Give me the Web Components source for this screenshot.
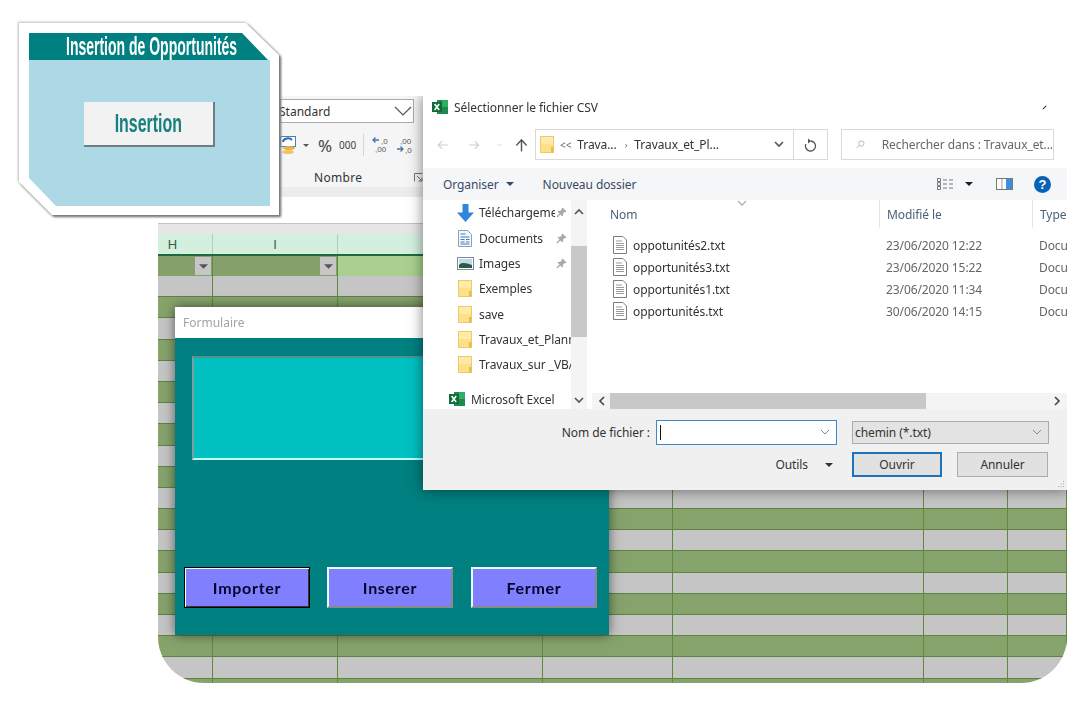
<!DOCTYPE html>
<html lang="fr"><head><meta charset="utf-8"><title>Insertion de Opportunités</title>
<style>
html,body{margin:0;height:100%;background:#fff}
body{width:1088px;height:708px;position:relative;overflow:hidden;font-family:"Noto Sans","Open Sans",sans-serif}
</style></head><body>
<x-sheet>
  <x-form slot="over"></x-form>
  <x-dialog slot="over"></x-dialog>
</x-sheet>
<x-card></x-card>
<script>
const def=(name,css,html)=>customElements.define(name,class extends HTMLElement{
  constructor(){super();const r=this.attachShadow({mode:'open'});r.innerHTML=`<style>${css}</style>${typeof html==='function'?html(this):html}`;}
});
const ICON={
 excel:`<svg width="16" height="16" viewBox="0 0 16 16"><rect x="5" y="1" width="11" height="14" fill="#1d8a4c"/><rect x="10" y="1" width="6" height="7" fill="#2fae66"/><rect x="0" y="3" width="10" height="10" fill="#0f6b3a"/><path d="M2.6 5l4.600 6M7.2 5l-4.600 6" stroke="#fff" stroke-width="1.600"/></svg>`,
 folder:`<svg width="14" height="17" viewBox="0 0 14 17"><rect x=".5" y=".5" width="13" height="16" fill="#ffe08a" stroke="#eccb6c"/><path d="M1 1h12v7H1z" fill="#ffeaa8"/><path d="M11 11h2.500v5.500H11z" fill="#e8bd4f"/></svg>`,
 down:`<svg width="17" height="18" viewBox="0 0 17 18"><path d="M5.500 0h6v8.500h5.500L8.500 18 0 8.500h5.500z" fill="#2f86dc"/></svg>`,
 doc:`<svg width="14" height="17" viewBox="0 0 14 17"><path d="M.5.500h9l4 4v12H.5z" fill="#f4f8fc" stroke="#8aa0b8"/><path d="M2.500 7h9M2.500 9.500h4M8 9.500h3.500M2.500 12h4M8 12h3.500M2.500 14h9M2.500 4h5" stroke="#3f7fb5"/></svg>`,
 img:`<svg width="17" height="13" viewBox="0 0 17 13"><rect x=".5" y=".5" width="16" height="12" fill="#fff" stroke="#7b8a99"/><rect x="2" y="2" width="13" height="9" fill="#bcd9ee"/><path d="M2 8c3-3 7-2 13 0v3H2z" fill="#2d5a47"/></svg>`,
 pin:`<svg width="11" height="11" viewBox="0 0 11 11"><path d="M6.500.500l4 4-1 .8-.9-.2-1.700 1.700.2 1.800-.8.8-2-2-2.800 3-1-.9 3-2.900-2-2 .8-.8 1.800.2 1.700-1.700-.2-.9z" fill="#a9a9a9"/></svg>`,
 txt:`<svg width="14" height="18" viewBox="0 0 14 18"><path d="M.5.500h9.500l3.500 3.500v13.500H.5z" fill="#fff" stroke="#7d7d7d"/><path d="M3 5h6M3 7.500h8M3 9.500h8M3 11.500h8M3 13.500h8" stroke="#9a9a9a"/></svg>`,
 chev:(d,c='#555',w=1.6)=>`<svg width="10" height="7" viewBox="0 0 10 7"><path d="${d==='up'?'M1 6l4-4 4 4':'M1 1l4 4 4-4'}" fill="none" stroke="${c}" stroke-width="${w}"/></svg>`,
 side:(d)=>`<svg width="7" height="10" viewBox="0 0 7 10"><path d="${d==='l'?'M6 1L2 5l4 4':'M1 1l4 4-4 4'}" fill="none" stroke="#444" stroke-width="1.600"/></svg>`,
 caret:(c='#333',w=8,h=4)=>`<svg width="${w}" height="${h}" viewBox="0 0 8 4"><path d="M0 0h8L4 4z" fill="${c}"/></svg>`
};
def('x-sheet',`
:host{position:absolute;left:158px;top:96px;width:909px;height:587px;background:#fff;overflow:hidden;border-radius:0 0 46px 46px;display:flex;flex-direction:column;filter:blur(.35px)}
.ribbon{height:91px;background:#f5f5f5;padding-left:122px;flex:none;box-sizing:border-box;color:#333;font:12px "Noto Sans",sans-serif}
.group{width:143px;height:91px;display:flex;flex-direction:column}
.std{box-sizing:border-box;width:134px;height:24px;margin-top:3px;background:#fff;border:1px solid #ababab;display:flex;align-items:center;justify-content:space-between;padding:0 1px 0 0}
.std span{margin-left:-2px}
.tools{display:flex;align-items:center;height:20px;margin-top:12px;gap:0}
.tools .pc{font-size:17px;margin-left:9px;width:21px;color:#444}
.tools .k{font-size:10px;width:24px;color:#444}
.tools i{width:1px;height:22px;background:#d5d5d5;margin-right:8px}
.lab{display:flex;margin-top:12px;height:20px;align-items:center;position:relative;letter-spacing:.3px}
.lab span:first-child{margin-left:34px}
.launch{margin-left:52px;display:flex}
.strip{height:10px;background:#ececec;flex:none}
.gap{height:26px;flex:none}
.fx{height:11px;background:#e6e6e6;border-top:1px solid #c4c4c4;box-sizing:border-box;flex:none}
.cols,.row{display:grid;grid-template-columns:55px 125px 205px 130px 251px 84px 59px;flex:none}
.cols{height:20px;background:#d3f0df;color:#3c5c49;font:13px "Liberation Sans",sans-serif}
.cols span{display:flex;align-items:center;justify-content:center;border-right:1px solid #b4cdbd}
.cols span:first-child{padding-right:25px}
.bar{height:2px;background:#1e6a3c;flex:none}
.row{height:21.2px;box-sizing:border-box;border-bottom:1px solid #5f8343;background:#c6c5c5}
.row.g{background:#86a36c}
.row span{border-right:1px solid #5f8a3e}
.row.h{height:20px;border:0;background:#86a06b}
.row.h span{display:flex;align-items:center;justify-content:flex-end;padding-right:1px;border-right:1px solid #5f8a3e}
.row.h .l{background:#a9d08e}
.dd{width:16px;height:18px;background:#c6c6c6;display:flex;align-items:center;justify-content:center}
`,()=>{
  const cells=()=>Array(7).fill('<span></span>').join('');
  let rows='';for(let i=0;i<20;i++)rows+=`<div class="row ${i%2?'g':''}">${cells()}</div>`;
  const dd=`<b class="dd">${ICON.caret('#555',9,5)}</b>`;
  return `<div class="ribbon"><div class="group">
    <div class="std"><span>Standard</span><svg width="18" height="10" viewBox="0 0 18 10"><path d="M1 1l8 8 8-8" fill="none" stroke="#555" stroke-width="1.200"/></svg></div>
    <div class="tools"><svg width="17" height="19" viewBox="0 0 17 19"><rect x=".5" y=".5" width="15" height="10" fill="#fff" stroke="#4a7fb5"/><path d="M3 6a5 4 0 0 1 9-2" fill="none" stroke="#2b6cb0" stroke-width="2"/><ellipse cx="9" cy="12" rx="6" ry="2" fill="#e9b44c"/><ellipse cx="8" cy="16" rx="6" ry="2" fill="#f0c26a"/></svg>
      <span style="margin-left:6px;display:flex">${ICON.caret('#555',6,3)}</span>
      <span class="pc">%</span><span class="k">000</span><i></i>
      <svg width="17" height="18" viewBox="0 0 17 18"><path d="M7 4H1m2.500-2.500L1 4l2.500 2.500" fill="none" stroke="#3b78b5" stroke-width="1.300"/><text x="9" y="8" font-size="8" fill="#555" font-family="Liberation Sans">,0</text><text x="3" y="16" font-size="8" fill="#555" font-family="Liberation Sans">,00</text></svg>
      <svg width="17" height="18" viewBox="0 0 17 18" style="margin-left:7px"><text x="4" y="8" font-size="8" fill="#555" font-family="Liberation Sans">,00</text><path d="M1 13h6m-2.500-2.500L7 13l-2.500 2.500" fill="none" stroke="#3b78b5" stroke-width="1.300"/><text x="9" y="17" font-size="8" fill="#555" font-family="Liberation Sans">,0</text></svg>
    </div>
    <div class="lab"><span>Nombre</span><span class="launch"><svg width="9" height="9" viewBox="0 0 9 9"><path d="M.5 8.500V.5h8M3 3l5 5M8 4.500V8H4.500" fill="none" stroke="#777"/></svg></span></div>
  </div></div>
  <div class="strip"></div><div class="gap"></div><div class="fx"></div>
  <div class="cols"><span>H</span><span>I</span><span></span><span></span><span></span><span></span><span></span></div>
  <div class="bar"></div>
  <div class="row h"><span>${dd}</span><span>${dd}</span><span class="l"></span><span class="l"></span><span class="l"></span><span class="l"></span><span class="l"></span></div>
  ${rows}<slot name="over"></slot>`;
});
def('x-card',`
:host{position:absolute;left:19px;top:23px;width:260px;height:192px;display:block;filter:blur(.3px) drop-shadow(2px 2px 1px #777) drop-shadow(-1px -1px 1px #bbb)}
.frame{box-sizing:border-box;width:100%;height:100%;background:#fff;padding:10px 9px 9px 10px;clip-path:polygon(0 0,227px 0,100% 32px,100% 100%,33px 100%,0 159px);display:flex;flex-direction:column}
.head{height:27px;flex:none;background:#008080;clip-path:polygon(0 0,213px 0,239px 27px,0 27px);color:#fff;display:flex;align-items:center;padding-left:37px;overflow:hidden}
.head span,.btn span{font-family:"Liberation Sans",sans-serif;font-weight:700;display:inline-block;transform-origin:0 50%;white-space:nowrap}
.head span{font-size:20px;transform:scale(.7,1.25)}
.body{flex:1;background:#add8e6;clip-path:polygon(0 0,100% 0,100% 100%,27px 100%,0 118px);display:flex;justify-content:center;align-items:flex-start;padding-top:42px}
.btn{width:131px;height:45px;box-sizing:border-box;background:#f2f2f2;border-right:2px solid #6f7c80;border-bottom:2px solid #6f7c80;display:flex;align-items:center;justify-content:center;color:#17807e}
.btn span{font-size:21px;transform-origin:50% 50%;transform:scale(.76,1.2)}
`,`<div class="frame"><div class="head"><span>Insertion de Opportunités</span></div><div class="body"><div class="btn"><span>Insertion</span></div></div></div>`);
def('x-fbtn',`
:host{box-sizing:border-box;width:126px;height:41px;display:flex;align-items:center;justify-content:center;background:#8080ff;border:2px solid;border-color:#e8ffff #8a8a8a #8a8a8a #e8ffff;color:#05052b;font:700 16px Lato,sans-serif;letter-spacing:.7px}
:host([active]){border:1px solid #000;box-shadow:inset 1px 1px 0 #e8ffff,inset -1px -1px 0 #333}
`,`<slot></slot>`);
def('x-form',`
:host{position:absolute;left:17px;top:211px;width:434px;height:328px;display:flex;flex-direction:column;background:#008080;box-shadow:0 0 11px rgba(0,0,0,.55)}
.t{height:31px;background:#fff;color:#a3a3a3;font:12px "Noto Sans",sans-serif;display:flex;align-items:center;padding-left:8px;flex:none}
.box{box-sizing:border-box;height:104px;margin:18px 17px 0;background:#00c0c0;border:2px solid;border-color:#4e9292 #bff #bff #7e9f9f}
.btns{margin-top:auto;padding:0 0 27px 9px;display:flex;gap:17px}
`,`<div class="t">Formulaire</div><div class="box"></div><div class="btns"><x-fbtn active>Importer</x-fbtn><x-fbtn>Inserer</x-fbtn><x-fbtn style="margin-left:1px">Fermer</x-fbtn></div>`);
def('x-nav',`
:host{display:flex;align-items:center;height:25.35px;padding-left:var(--p,33px);color:#333;font:12px "Noto Sans",sans-serif;white-space:nowrap;overflow:hidden;position:relative}
.ic{width:18px;display:flex;justify-content:center;flex:none;margin-right:5px}
.n{overflow:hidden;width:92px;flex:none}
:host([pin]) .n{width:76px}
.pin{display:flex;margin-left:1px}
`,h=>{const i=h.getAttribute('icon');return `<span class="ic">${ICON[i]}</span><span class="n"><slot></slot></span>${h.hasAttribute('pin')?`<span class="pin">${ICON.pin}</span>`:''}`});
def('x-file',`
:host{display:grid;grid-template-columns:287px 153px 1fr;height:22px;align-items:center;color:#666;font:12px "Noto Sans",sans-serif;letter-spacing:-.1px;white-space:nowrap}
.a{display:flex;align-items:center;gap:6px;padding-left:21px;color:#333}
`,h=>`<span class="a">${ICON.txt}<slot></slot></span><span style="padding-left:7px">${h.getAttribute('d')}</span><span style="padding-left:7px">Docu</span>`);
def('x-dialog',`
:host{position:absolute;left:265px;top:0;width:644px;height:394px;background:#fff;display:flex;flex-direction:column;box-shadow:0 0 13px rgba(0,0,0,.5);font:12px "Noto Sans",sans-serif;color:#333;letter-spacing:-.08px}
svg{display:block}
.title{height:33px;flex:none;display:flex;align-items:center;gap:6px;padding:0 20px 11px 9px;box-sizing:border-box}
.title b{font-weight:400;flex:1}
.tick{width:5px;height:1px;background:#111;transform:rotate(-45deg)}
.addr{height:39px;flex:none;display:flex;align-items:flex-start;padding-left:14px}
.nav{display:flex;align-items:center;width:98px;height:31px}
.ab{box-sizing:border-box;height:31px;border:1px solid #d9d9d9;display:flex;align-items:center}
.path{width:259px;padding-left:4px;gap:6px;color:#333;white-space:nowrap}
.ref{width:35px;justify-content:center;margin-left:-1px}
.search{width:213px;margin-left:13px;padding-left:14px;gap:17px;color:#666;white-space:nowrap;overflow:hidden}
.tb{height:32px;flex:none;background:#f5f6f7;display:flex;align-items:center;padding-left:20px;color:#3b4a63}
.main{flex:1;display:flex;min-height:0}
.tree{width:148px;flex:none;overflow:hidden}
.vs{width:16px;flex:none;background:#f4f4f4;display:flex;flex-direction:column;align-items:center}
.th{width:16px;height:91px;background:#c8c8c8;margin-top:24px}
.right{flex:1;margin-left:5px;display:flex;flex-direction:column;min-width:0}
.hd{display:grid;grid-template-columns:287px 153px 1fr;height:28px;color:#4c607a;flex:none;position:relative}
.hd span{display:flex;align-items:center;padding-left:7px;border-left:1px solid #e5e5e5}
.hd span:first-child{padding-left:18px;border:0}
.sort{position:absolute;left:145px;top:0}
.list{flex:1;padding-top:6px}
.hs{height:16px;background:#f4f4f4;display:flex;align-items:center;flex:none}
.hs .tt{width:316px;height:16px;background:#c8c8c8;margin-left:5px}
.bottom{height:81px;flex:none;background:#f0f0f0;box-sizing:border-box;padding-top:11px;position:relative}
.r{display:flex;justify-content:flex-end;align-items:center}
.r1{height:25px;padding-right:18px}
.r2{height:25px;padding-right:19px;margin-top:7px}
.inp{box-sizing:border-box;width:181px;height:25px;background:#fff;border:1px solid #3d87c7;margin:0 15px 0 6px;display:flex;align-items:center;justify-content:space-between;padding:0 6px 0 3px}
.cur{width:1px;height:15px;background:#111}
.sel{box-sizing:border-box;width:197px;height:23px;background:#e3e3e3;border:1px solid #ababab;display:flex;align-items:center;justify-content:space-between;padding:0 6px 0 2px}
.b{box-sizing:border-box;width:91px;height:25px;background:#e1e1e1;border:1px solid #adadad;display:flex;align-items:center;justify-content:center}
.b.p{width:90px;border:2px solid #1d72b8;margin-right:15px}
.grip{position:absolute;right:2px;bottom:2px}
`,`
<div class="title">${ICON.excel}<b>Sélectionner le fichier CSV</b><span class="tick"></span></div>
<div class="addr">
 <div class="nav">
  <svg width="12" height="12" viewBox="0 0 14 12"><path d="M13 6H2m4-4.500L1.500 6 6 10.500" fill="none" stroke="#cfcfcf" stroke-width="1.300"/></svg>
  <svg width="12" height="12" viewBox="0 0 14 12" style="margin-left:19px"><path d="M1 6h11M8 1.500L12.500 6 8 10.500" fill="none" stroke="#cfcfcf" stroke-width="1.300"/></svg>
  <svg width="5" height="4" viewBox="0 0 10 7" style="margin-left:17px"><path d="M1 1l4 4 4-4" fill="none" stroke="#d5d5d5" stroke-width="2"/></svg>
  <svg width="13" height="14" viewBox="0 0 14 14" style="margin-left:13px"><path d="M7 14V2M1.500 7.500L7 1.500l5.500 6" fill="none" stroke="#555" stroke-width="1.500"/></svg>
 </div>
 <div class="ab path">${ICON.folder}<span style="font-size:10px;color:#666">&lt;&lt;</span><span>Trava...</span><span style="font-size:9px;color:#666;margin:0 1px 0 2px">›</span><span>Travaux_et_Pl...</span><span style="margin-left:auto;padding-right:9px">${ICON.chev('d')}</span></div>
 <div class="ab ref"><svg width="13" height="14" viewBox="0 0 13 14"><path d="M6.500 3a5 5 0 1 1-4.600 3" fill="none" stroke="#555" stroke-width="1.300"/><path d="M4 .5l3 2.500-3 2.500z" fill="#555"/></svg></div>
 <div class="ab search"><svg width="13" height="13" viewBox="0 0 13 13"><circle cx="8" cy="5" r="4" fill="none" stroke="#999"/><path d="M5 8l-4 4" stroke="#999"/></svg><span>Rechercher dans : Travaux_et...</span></div>
</div>
<div class="tb"><span>Organiser</span><span style="margin-left:7px">${ICON.caret('#3b4a63',8,4)}</span><span style="margin-left:29px">Nouveau dossier</span>
 <svg style="margin-left:auto" width="18" height="13" viewBox="0 0 18 13"><path d="M.5.500h3v3h-3zM.5 4.500h3v3h-3zM.5 8.500h3v3h-3zM6 2h4M12 2h4M6 6h4M12 6h4M6 10h4M12 10h4" fill="none" stroke="#777"/></svg>
 <span style="margin:0 23px 0 10px">${ICON.caret('#123',8,4)}</span>
 <svg width="17" height="12" viewBox="0 0 17 12"><rect x=".5" y=".5" width="16" height="11" fill="#fff" stroke="#777"/><rect x="10" y="1" width="6" height="10" fill="#3c8ede"/><path d="M6 1v10" stroke="#999"/></svg>
 <svg style="margin:0 16px 0 21px" width="17" height="17" viewBox="0 0 17 17"><circle cx="8.500" cy="8.500" r="8.500" fill="#0a62b5"/><text x="8.500" y="13" font-size="13" font-weight="700" text-anchor="middle" fill="#fff" font-family="Liberation Sans">?</text></svg>
</div>
<div class="main">
 <div class="tree">
  <x-nav icon="down" pin>Téléchargements</x-nav><x-nav icon="doc" pin>Documents</x-nav><x-nav icon="img" pin>Images</x-nav>
  <x-nav icon="folder">Exemples</x-nav><x-nav icon="folder">save</x-nav><x-nav icon="folder">Travaux_et_Planning</x-nav><x-nav icon="folder">Travaux_sur _VBA</x-nav>
  <x-nav icon="excel" style="--p:25px;margin-top:9px">Microsoft Excel</x-nav>
 </div>
 <div class="vs"><div style="height:22px;display:flex;align-items:center">${ICON.chev('up')}</div><div class="th"></div><div style="margin-top:auto;height:17px;display:flex;align-items:center">${ICON.chev('d')}</div></div>
 <div class="right">
  <div class="hd"><span>Nom</span><span>Modifié le</span><span>Type</span><div class="sort">${ICON.chev('d','#bbb')}</div></div>
  <div class="list"><x-file d="23/06/2020 12:22">oppotunités2.txt</x-file><x-file d="23/06/2020 15:22">opportunités3.txt</x-file><x-file d="23/06/2020 11:34">opportunités1.txt</x-file><x-file d="30/06/2020 14:15">opportunités.txt</x-file></div>
  <div class="hs"><span style="margin-left:6px">${ICON.side('l')}</span><div class="tt"></div><span style="margin-left:auto;margin-right:6px">${ICON.side('r')}</span></div>
 </div>
</div>
<div class="bottom">
 <div class="r r1"><span>Nom de fichier :</span><div class="inp"><i class="cur"></i>${ICON.chev('d','#888',1)}</div><div class="sel"><span>chemin (*.txt)</span>${ICON.chev('d','#888',1)}</div></div>
 <div class="r r2"><span>Outils</span><span style="margin:0 19px 0 17px">${ICON.caret('#333',8,4)}</span><div class="b p">Ouvrir</div><div class="b">Annuler</div></div>
 <svg class="grip" width="8" height="8" viewBox="0 0 8 8"><path d="M6 1h1v1H6zM3.500 3.500h1v1h-1zM6 3.500h1v1H6zM1 6h1v1H1zM3.500 6h1v1h-1zM6 6h1v1H6z" fill="#aaa"/></svg>
</div>`);
</script>
</body></html>
